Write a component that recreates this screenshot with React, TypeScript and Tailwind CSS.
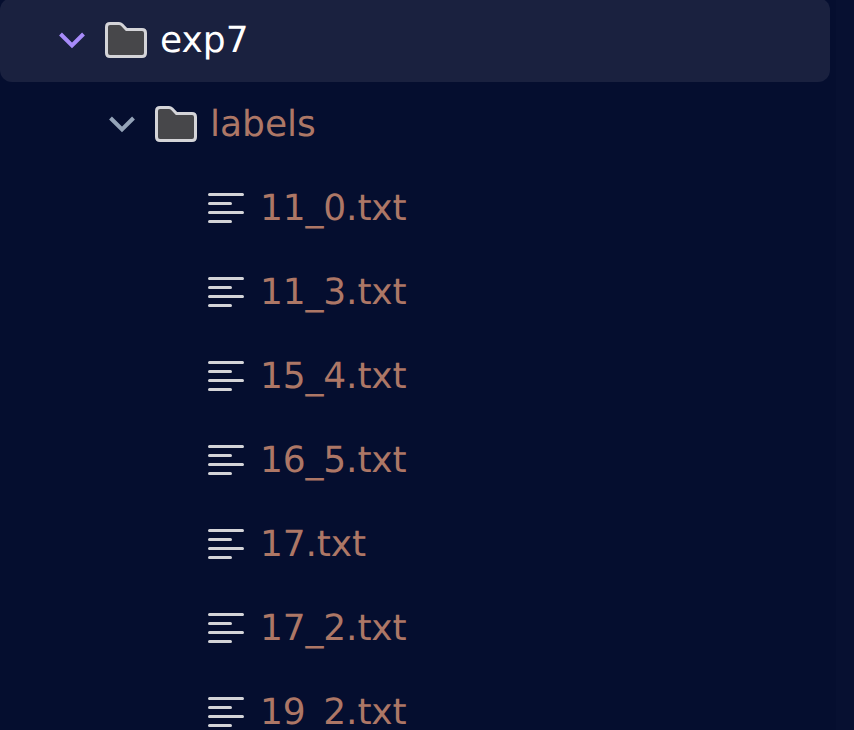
const files = ['11_0.txt', '11_3.txt', '15_4.txt', '16_5.txt', '17.txt', '17_2.txt', '19_2.txt']

function Chevron({ color }: { color: string }) {
  return (
    <svg width="28" height="18" viewBox="0 0 28 18" fill="none" className="shrink-0">
      <path d="M2.5 3 L14 14.5 L25.5 3" stroke={color} strokeWidth="4" />
    </svg>
  )
}

function FolderIcon() {
  return (
    <svg width="42" height="36" viewBox="0 0 42 36" fill="none" className="shrink-0">
      <path
        d="M5 1.5 H14 C15.3 1.5 16.2 2 17 2.8 L21.5 7.5 H37 C39.2 7.5 40.5 8.8 40.5 11 V31 C40.5 33.2 39.2 34.5 37 34.5 H5 C2.8 34.5 1.5 33.2 1.5 31 V5 C1.5 2.8 2.8 1.5 5 1.5 Z"
        fill="#47474a"
        stroke="#d4d4d8"
        strokeWidth="3"
      />
    </svg>
  )
}

function FileIcon() {
  return (
    <svg width="36" height="30" viewBox="0 0 36 30" fill="none" className="shrink-0">
      <g stroke="#d4d4d8" strokeWidth="3" strokeLinecap="round">
        <path d="M1.5 1.5 H34.5" />
        <path d="M1.5 10.5 H22.5" />
        <path d="M1.5 19.5 H34.5" />
        <path d="M1.5 28.5 H22.5" />
      </g>
    </svg>
  )
}

export default function App() {
  return (
    <div className="flex h-[730px] w-[854px] overflow-hidden bg-[#050e2f] font-['DejaVu_Sans',sans-serif] text-[36px] [text-rendering:geometricPrecision]">
      <div className="-mt-[2px] w-[836px] shrink-0">
        <div className="flex h-[84px] w-[830px] items-center rounded-xl bg-[#1a213f] pl-[58px]">
          <Chevron color="#a78bfa" />
          <div className="ml-[19px]">
            <FolderIcon />
          </div>
          <span className="ml-[13px] pt-[2px] text-white">exp7</span>
        </div>

        <div className="flex h-[84px] items-center pl-[108px]">
          <Chevron color="#94a3b8" />
          <div className="ml-[19px]">
            <FolderIcon />
          </div>
          <span className="ml-[13px] pt-[2px] text-[#ad7766]">labels</span>
        </div>

        {files.map((name) => (
          <div key={name} className="flex h-[84px] items-center pl-[208px]">
            <FileIcon />
            <span className="ml-[16px] pt-[2px] tracking-[-0.15px] text-[#ad7766]">{name}</span>
          </div>
        ))}
      </div>
      <div className="flex-1 bg-[#071031]" />
    </div>
  )
}
